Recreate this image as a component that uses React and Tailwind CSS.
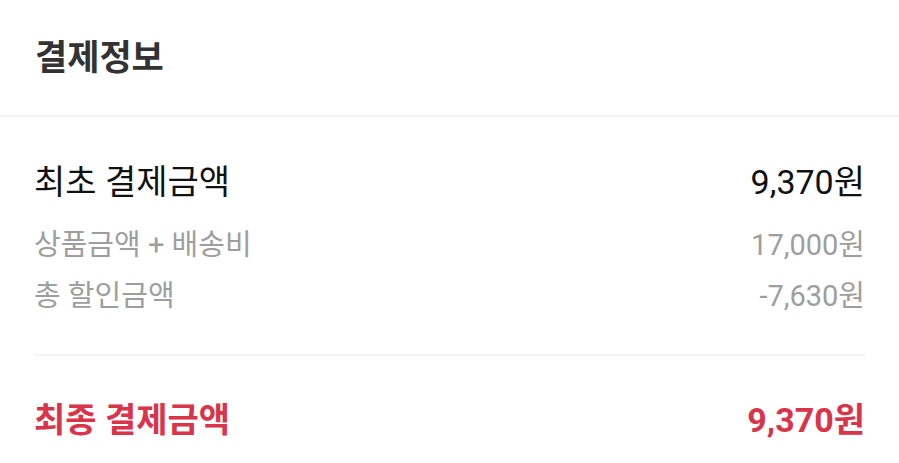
export default function App() {
  const font = { fontFamily: 'Roboto, "Noto Sans CJK KR", sans-serif' };
  return (
    <div className="w-[899px] h-[463px] bg-white overflow-hidden" style={font}>
      <div className="h-[117px] flex items-center px-[35px] border-b-2 border-[#f3f3f3]">
        <h1 className="text-[35px] font-bold text-[#333333] leading-none pt-[2px]">결제정보</h1>
      </div>
      <div className="px-[34px]">
        <div className="pt-[45px] pb-[39px] border-b-2 border-[#f3f3f3]">
          <div className="flex justify-between items-center h-[40px] text-[34px] text-[#111111]">
            <span>최초 결제금액</span>
            <span>9,370원</span>
          </div>
          <div className="flex justify-between items-center h-[36px] mt-[26px] text-[29px] text-[#9e9e9e]">
            <span>상품금액 + 배송비</span>
            <span>17,000원</span>
          </div>
          <div className="flex justify-between items-center h-[36px] mt-[15px] text-[29px] text-[#9e9e9e]">
            <span>총 할인금액</span>
            <span>-7,630원</span>
          </div>
        </div>
        <div className="flex justify-between items-center h-[40px] mt-[44px] text-[34px] font-bold text-[#d9344a]">
          <span>최종 결제금액</span>
          <span>9,370원</span>
        </div>
      </div>
    </div>
  );
}
